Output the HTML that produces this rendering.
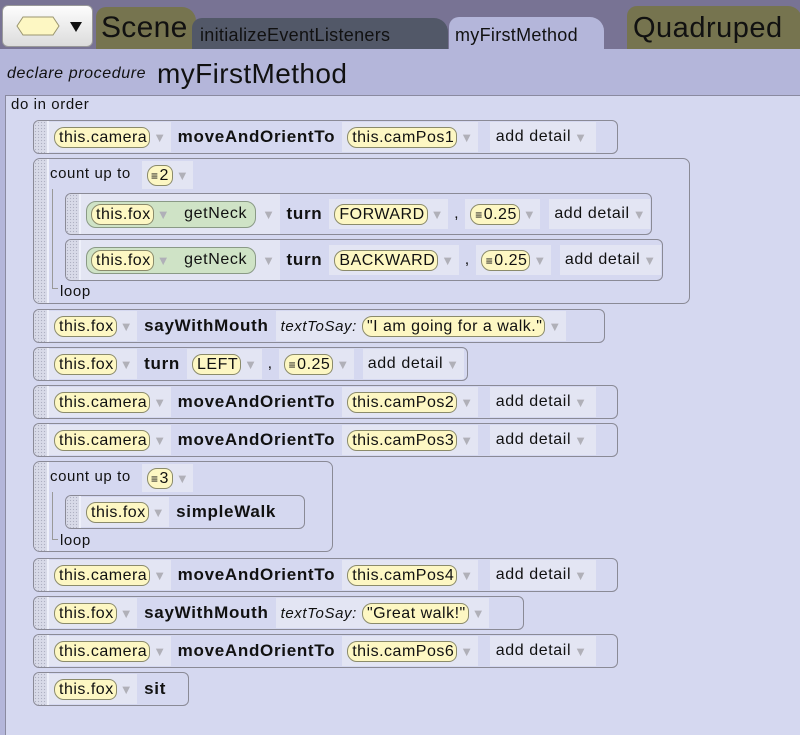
<!DOCTYPE html>
<html><head><meta charset="utf-8"><style>
*{box-sizing:border-box;margin:0;padding:0}
body{width:800px;height:725px;overflow:hidden;background:#b4b6da;font-family:"Liberation Sans","DejaVu Sans",sans-serif;font-size:16px;letter-spacing:0.6px;color:#111;position:relative}
.top{position:absolute;left:0;top:0;width:800px;height:49px;background:#787394}
.dd{position:absolute;left:2px;top:5px;width:91px;height:42px;border-radius:6px;background:linear-gradient(#fdfdfd,#dcdcdc);border:1px solid #999}
.tab{position:absolute;border-radius:10px 14px 0 0;white-space:nowrap}
.hdr{position:absolute;left:0;top:49px;width:800px;height:46px;background:#b4b6da}
.body{position:absolute;left:5px;top:95px;width:800px;height:640px;background:#d5d8f0;border-left:1px solid #8a8aa0;border-top:1px solid #8a8aa0}
.st{position:absolute;height:34px;border:1px solid #8a8a96;border-radius:6px;background:#d5d8f0;display:flex;align-items:center;overflow:hidden}
.st>*,.slot>*,.green>*{flex:none}
.grip{width:15px;align-self:stretch;flex:none;background-color:#d8dae8;background-image:radial-gradient(#aeb0c2 0.7px,transparent 0.8px);background-size:3px 3px;border-right:2px solid #eef0fa}
.slot{background:#e3e5f3;height:30px;display:flex;align-items:center;padding:0 4px 0 5px;flex:none;white-space:nowrap}
.pill{background:#fdf7c3;border:1px solid #8b8b6b;border-radius:10px 8px 8px 10px;padding:0 2px 0 4px;height:21px;line-height:19px;font-size:16px;letter-spacing:0.5px;white-space:nowrap}
.arr{color:#b0b0b8;font-size:13px;margin-left:3px}
.kw{font-weight:bold;font-size:17px;letter-spacing:0.7px;margin:0 7px;white-space:nowrap}
.it{font-style:italic;font-size:15px;white-space:nowrap}
.green{background:#cfe3c6;border:1px solid #8a9a86;border-radius:10px;height:27px;display:flex;align-items:center;padding:0 8px 0 4px}
.cnt{position:absolute;border:1px solid #8a8a96;border-radius:7px;background:#d5d8f0;overflow:hidden}
.cnt>.grip{position:absolute;left:0;top:0;bottom:0}
.lbl{position:absolute;font-size:15px;white-space:nowrap}
.num{font-size:12px;font-weight:bold;margin-right:1px}
</style></head><body>
<div class="top"></div>
<div class="dd"><svg width="91" height="42" style="position:absolute;left:0;top:0"><polygon points="14,20 20,11 50,11 56,20 50,29 20,29" fill="#fdf7c3" stroke="#9a9570"/><polygon points="67,16 79,16 73,26" fill="#111"/></svg></div>
<div class="tab" style="left:96px;top:7px;width:100px;height:42px;background:#76744f"><span style="position:absolute;left:5px;top:4px;font-size:30px;letter-spacing:0.3px">Scene</span></div>
<div class="tab" style="left:192px;top:18px;width:256px;height:31px;background:#525868"><span style="position:absolute;left:8px;top:7px;font-size:18px;letter-spacing:0.3px">initializeEventListeners</span></div>
<div class="tab" style="left:449px;top:17px;width:155px;height:33px;background:#b4b6da"><span style="position:absolute;left:6px;top:8px;font-size:18px;letter-spacing:0.3px">myFirstMethod</span></div>
<div class="tab" style="left:627px;top:6px;width:175px;height:43px;background:#76744f"><span style="position:absolute;left:6px;top:6px;font-size:29px;letter-spacing:0.5px">Quadruped</span></div>
<div class="hdr"><span class="it" style="position:absolute;left:7px;top:16px;font-size:16px">declare procedure</span><span style="position:absolute;left:157px;top:9px;font-size:28px;letter-spacing:0.4px">myFirstMethod</span></div>
<div class="body"></div>
<span class="lbl" style="left:11px;top:96px">do in order</span>

<div class="st" style="left:33px;top:120px;width:585px"><div class="grip"></div><div class="slot"><span class="pill">this.camera</span><span class="arr">▼</span></div><span class="kw">moveAndOrientTo</span><div class="slot"><span class="pill">this.camPos1</span><span class="arr">▼</span></div><div class="slot" style="margin-left:12px;padding:0 8px 0 6px">add detail<span class="arr">▼</span></div></div>

<div class="cnt" style="left:33px;top:158px;width:657px;height:146px"><div class="grip"></div>
<span class="lbl" style="left:16px;top:6px">count up to</span>
<div class="slot" style="position:absolute;left:108px;top:2px;height:28px"><span class="pill" style="padding:0 3px"><span class="num">≡</span>2</span><span class="arr">▼</span></div>
<div style="position:absolute;left:18px;top:30px;width:1px;height:100px;background:#999"></div>
<div style="position:absolute;left:18px;top:129px;width:6px;height:1px;background:#999"></div>
<span class="lbl" style="left:26px;top:124px">loop</span>
<div class="st" style="left:31px;top:34px;width:587px;height:42px"><div class="grip"></div><div class="slot" style="height:40px"><div class="green"><span class="pill">this.fox</span><span class="arr">▼</span><span style="margin-left:14px">getNeck</span></div><span class="arr" style="margin-left:6px">▼</span></div><span class="kw">turn</span><div class="slot"><span class="pill">FORWARD</span><span class="arr">▼</span></div><span style="margin:0 6px">,</span><div class="slot"><span class="pill"><span class="num">≡</span>0.25</span><span class="arr">▼</span></div><div class="slot" style="margin-left:9px">add detail<span class="arr">▼</span></div></div>
<div class="st" style="left:31px;top:80px;width:598px;height:42px"><div class="grip"></div><div class="slot" style="height:40px"><div class="green"><span class="pill">this.fox</span><span class="arr">▼</span><span style="margin-left:14px">getNeck</span></div><span class="arr" style="margin-left:6px">▼</span></div><span class="kw">turn</span><div class="slot"><span class="pill">BACKWARD</span><span class="arr">▼</span></div><span style="margin:0 6px">,</span><div class="slot"><span class="pill"><span class="num">≡</span>0.25</span><span class="arr">▼</span></div><div class="slot" style="margin-left:9px">add detail<span class="arr">▼</span></div></div>
</div>

<div class="st" style="left:33px;top:309px;width:572px"><div class="grip"></div><div class="slot"><span class="pill">this.fox</span><span class="arr">▼</span></div><span class="kw">sayWithMouth</span><div class="slot"><span class="it">textToSay:</span>&nbsp;<span class="pill">"I am going for a walk."</span><span class="arr">▼</span></div></div>

<div class="st" style="left:33px;top:347px;width:435px"><div class="grip"></div><div class="slot"><span class="pill">this.fox</span><span class="arr">▼</span></div><span class="kw">turn</span><div class="slot"><span class="pill">LEFT</span><span class="arr">▼</span></div><span style="margin:0 6px">,</span><div class="slot"><span class="pill"><span class="num">≡</span>0.25</span><span class="arr">▼</span></div><div class="slot" style="margin-left:9px">add detail<span class="arr">▼</span></div></div>

<div class="st" style="left:33px;top:385px;width:585px"><div class="grip"></div><div class="slot"><span class="pill">this.camera</span><span class="arr">▼</span></div><span class="kw">moveAndOrientTo</span><div class="slot"><span class="pill">this.camPos2</span><span class="arr">▼</span></div><div class="slot" style="margin-left:12px;padding:0 8px 0 6px">add detail<span class="arr">▼</span></div></div>
<div class="st" style="left:33px;top:423px;width:585px"><div class="grip"></div><div class="slot"><span class="pill">this.camera</span><span class="arr">▼</span></div><span class="kw">moveAndOrientTo</span><div class="slot"><span class="pill">this.camPos3</span><span class="arr">▼</span></div><div class="slot" style="margin-left:12px;padding:0 8px 0 6px">add detail<span class="arr">▼</span></div></div>

<div class="cnt" style="left:33px;top:461px;width:300px;height:91px"><div class="grip"></div>
<span class="lbl" style="left:16px;top:6px">count up to</span>
<div class="slot" style="position:absolute;left:108px;top:2px;height:28px"><span class="pill" style="padding:0 3px"><span class="num">≡</span>3</span><span class="arr">▼</span></div>
<div style="position:absolute;left:18px;top:30px;width:1px;height:48px;background:#999"></div>
<div style="position:absolute;left:18px;top:77px;width:6px;height:1px;background:#999"></div>
<span class="lbl" style="left:26px;top:70px">loop</span>
<div class="st" style="left:31px;top:33px;width:240px"><div class="grip"></div><div class="slot"><span class="pill">this.fox</span><span class="arr">▼</span></div><span class="kw">simpleWalk</span></div>
</div>

<div class="st" style="left:33px;top:558px;width:585px"><div class="grip"></div><div class="slot"><span class="pill">this.camera</span><span class="arr">▼</span></div><span class="kw">moveAndOrientTo</span><div class="slot"><span class="pill">this.camPos4</span><span class="arr">▼</span></div><div class="slot" style="margin-left:12px;padding:0 8px 0 6px">add detail<span class="arr">▼</span></div></div>

<div class="st" style="left:33px;top:596px;width:491px"><div class="grip"></div><div class="slot"><span class="pill">this.fox</span><span class="arr">▼</span></div><span class="kw">sayWithMouth</span><div class="slot"><span class="it">textToSay:</span>&nbsp;<span class="pill">"Great walk!"</span><span class="arr">▼</span></div></div>

<div class="st" style="left:33px;top:634px;width:585px"><div class="grip"></div><div class="slot"><span class="pill">this.camera</span><span class="arr">▼</span></div><span class="kw">moveAndOrientTo</span><div class="slot"><span class="pill">this.camPos6</span><span class="arr">▼</span></div><div class="slot" style="margin-left:12px;padding:0 8px 0 6px">add detail<span class="arr">▼</span></div></div>

<div class="st" style="left:33px;top:672px;width:156px"><div class="grip"></div><div class="slot"><span class="pill">this.fox</span><span class="arr">▼</span></div><span class="kw">sit</span></div>
</body></html>
